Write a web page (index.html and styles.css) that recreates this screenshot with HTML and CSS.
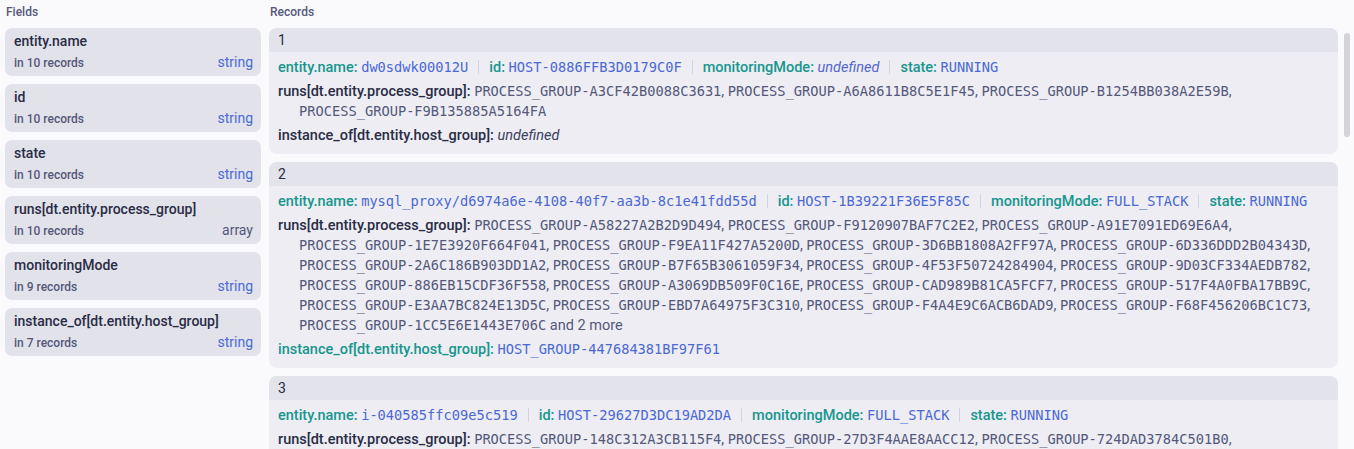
FILE: index.html
```html
<!DOCTYPE html>
<html lang="en">
<head>
<meta charset="utf-8">
<title>Records</title>
<link rel="stylesheet" href="styles.css">
</head>
<body>
<div class="app">
  <aside class="fields">
    <div class="section-title">Fields</div>
    <div class="field-list">
      <div class="field-card">
        <div class="field-name">entity.name</div>
        <div class="field-meta"><span class="count">in 10 records</span><span class="type is-string">string</span></div>
      </div>
      <div class="field-card">
        <div class="field-name">id</div>
        <div class="field-meta"><span class="count">in 10 records</span><span class="type is-string">string</span></div>
      </div>
      <div class="field-card">
        <div class="field-name">state</div>
        <div class="field-meta"><span class="count">in 10 records</span><span class="type is-string">string</span></div>
      </div>
      <div class="field-card">
        <div class="field-name">runs[dt.entity.process_group]</div>
        <div class="field-meta"><span class="count">in 10 records</span><span class="type">array</span></div>
      </div>
      <div class="field-card">
        <div class="field-name">monitoringMode</div>
        <div class="field-meta"><span class="count">in 9 records</span><span class="type is-string">string</span></div>
      </div>
      <div class="field-card">
        <div class="field-name">instance_of[dt.entity.host_group]</div>
        <div class="field-meta"><span class="count">in 7 records</span><span class="type is-string">string</span></div>
      </div>
    </div>
  </aside>

  <main class="records">
    <div class="section-title">Records</div>
    <div class="records-body">
      <div class="record-list">
        <section class="record">
          <div class="record-head">1</div>
          <div class="record-body">
            <div class="row"><span class="key">entity.name:</span> <span class="val">dw0sdwk00012U</span><span class="sep"></span><span class="key">id:</span> <span class="val">HOST-0886FFB3D0179C0F</span><span class="sep"></span><span class="key">monitoringMode:</span> <span class="undef undef-blue">undefined</span><span class="sep"></span><span class="key">state:</span> <span class="val">RUNNING</span></div>
            <div class="row list"><span class="key-dark">runs[dt.entity.process_group]:</span> <span class="mono">PROCESS_GROUP-A3CF42B0088C3631</span>, <span class="mono">PROCESS_GROUP-A6A8611B8C5E1F45</span>, <span class="mono">PROCESS_GROUP-B1254BB038A2E59B</span>, <span class="mono">PROCESS_GROUP-F9B135885A5164FA</span></div>
            <div class="row"><span class="key-dark">instance_of[dt.entity.host_group]:</span> <span class="undef">undefined</span></div>
          </div>
        </section>

        <section class="record">
          <div class="record-head">2</div>
          <div class="record-body">
            <div class="row"><span class="key">entity.name:</span> <span class="val">mysql_proxy/d6974a6e-4108-40f7-aa3b-8c1e41fdd55d</span><span class="sep"></span><span class="key">id:</span> <span class="val">HOST-1B39221F36E5F85C</span><span class="sep"></span><span class="key">monitoringMode:</span> <span class="val">FULL_STACK</span><span class="sep"></span><span class="key">state:</span> <span class="val">RUNNING</span></div>
            <div class="row list"><span class="key-dark">runs[dt.entity.process_group]:</span> <span class="mono">PROCESS_GROUP-A58227A2B2D9D494</span>, <span class="mono">PROCESS_GROUP-F9120907BAF7C2E2</span>, <span class="mono">PROCESS_GROUP-A91E7091ED69E6A4</span>, <span class="mono">PROCESS_GROUP-1E7E3920F664F041</span>, <span class="mono">PROCESS_GROUP-F9EA11F427A5200D</span>, <span class="mono">PROCESS_GROUP-3D6BB1808A2FF97A</span>, <span class="mono">PROCESS_GROUP-6D336DDD2B04343D</span>, <span class="mono">PROCESS_GROUP-2A6C186B903DD1A2</span>, <span class="mono">PROCESS_GROUP-B7F65B3061059F34</span>, <span class="mono">PROCESS_GROUP-4F53F50724284904</span>, <span class="mono">PROCESS_GROUP-9D03CF334AEDB782</span>, <span class="mono">PROCESS_GROUP-886EB15CDF36F558</span>, <span class="mono">PROCESS_GROUP-A3069DB509F0C16E</span>, <span class="mono">PROCESS_GROUP-CAD989B81CA5FCF7</span>, <span class="mono">PROCESS_GROUP-517F4A0FBA17BB9C</span>, <span class="mono">PROCESS_GROUP-E3AA7BC824E13D5C</span>, <span class="mono">PROCESS_GROUP-EBD7A64975F3C310</span>, <span class="mono">PROCESS_GROUP-F4A4E9C6ACB6DAD9</span>, <span class="mono">PROCESS_GROUP-F68F456206BC1C73</span>, <span class="mono">PROCESS_GROUP-1CC5E6E1443E706C</span> and 2 more</div>
            <div class="row"><span class="key">instance_of[dt.entity.host_group]:</span> <span class="val">HOST_GROUP-447684381BF97F61</span></div>
          </div>
        </section>

        <section class="record">
          <div class="record-head">3</div>
          <div class="record-body">
            <div class="row"><span class="key">entity.name:</span> <span class="val">i-040585ffc09e5c519</span><span class="sep"></span><span class="key">id:</span> <span class="val">HOST-29627D3DC19AD2DA</span><span class="sep"></span><span class="key">monitoringMode:</span> <span class="val">FULL_STACK</span><span class="sep"></span><span class="key">state:</span> <span class="val">RUNNING</span></div>
            <div class="row list"><span class="key-dark">runs[dt.entity.process_group]:</span> <span class="mono">PROCESS_GROUP-148C312A3CB115F4</span>, <span class="mono">PROCESS_GROUP-27D3F4AAE8AACC12</span>, <span class="mono">PROCESS_GROUP-724DAD3784C501B0</span>, <span class="mono">PROCESS_GROUP-0B2E91C4D7A3F685</span></div>
            <div class="row"><span class="key-dark">instance_of[dt.entity.host_group]:</span> <span class="undef">undefined</span></div>
          </div>
        </section>
      </div>
      <div class="scrollbar"><div class="thumb"></div></div>
    </div>
  </main>
</div>
</body>
</html>
```

FILE: styles.css
```css
* { box-sizing: border-box; }

html, body {
  margin: 0;
  height: 100%;
  background: #fafafc;
  color: #2a2c46;
  font-family: Roboto, "Noto Sans", "DejaVu Sans", sans-serif;
  overflow: hidden;
}

.app {
  display: grid;
  grid-template-columns: 256px 1fr;
  column-gap: 8px;
  height: 100vh;
  padding-left: 5px;
}

.section-title {
  font-size: 12px;
  line-height: 16px;
  font-weight: 500;
  color: #55587a;
  padding: 4px 0 0 1px;
  height: 28px;
}

/* Fields panel */
.field-list {
  display: flex;
  flex-direction: column;
  gap: 8px;
}

.field-card {
  height: 48px;
  background: #e2e2ea;
  border-radius: 7px;
  padding: 3px 8px 0 9px;
}

.field-name {
  font-size: 14px;
  line-height: 20px;
  font-weight: 500;
  color: #2a2c46;
  white-space: nowrap;
}

.field-meta {
  display: flex;
  justify-content: space-between;
  align-items: baseline;
  margin-top: 2px;
  line-height: 18px;
}

.count {
  font-size: 12px;
  font-weight: 500;
  color: #55587a;
}

.type {
  font-size: 14px;
  color: #55587a;
}

.type.is-string { color: #4b6bd6; }

/* Records */
.records {
  display: flex;
  flex-direction: column;
  min-width: 0;
  overflow: hidden;
}

.records-body {
  flex: 1;
  display: flex;
  min-height: 0;
}

.record-list {
  flex: 1;
  min-width: 0;
  display: flex;
  flex-direction: column;
  gap: 8px;
  overflow: hidden;
}

.scrollbar {
  width: 16px;
  flex: none;
  padding: 5px 4px 0 6px;
}

.thumb {
  width: 6px;
  height: 104px;
  border-radius: 3px;
  background: #d3d3dc;
}

.record {
  border-radius: 8px;
  overflow: hidden;
  background: #ededf3;
  flex: none;
}

.record-head {
  height: 24px;
  line-height: 24px;
  padding: 0 9px;
  background: #e3e3eb;
  font-size: 14px;
  color: #2a2c46;
}

.record-body {
  padding: 4px 12px 6px 9px;
}

.row {
  padding: 2px 0;
  font-size: 14.5px;
  line-height: 20px;
  color: #55587a;
}

.row span {
  line-height: 1;
}

.row.list {
  padding-left: 21px;
  text-indent: -21px;
}

.key {
  color: #17968e;
  font-weight: 500;
}

.key-dark {
  color: #2a2c46;
  font-weight: 500;
}

.val {
  font-family: "DejaVu Sans Mono", "Liberation Mono", monospace;
  font-size: 13.7px;
  color: #4b68d4;
}

.mono {
  font-family: "DejaVu Sans Mono", "Liberation Mono", monospace;
  font-size: 13.7px;
  color: #55587a;
}

.undef {
  font-style: italic;
  color: #3e4060;
}

.undef.undef-blue { color: #5667cc; }

.sep {
  display: inline-block;
  width: 1px;
  height: 14px;
  margin: 0 10px;
  vertical-align: -2px;
  background: #d2d4df;
}
```
